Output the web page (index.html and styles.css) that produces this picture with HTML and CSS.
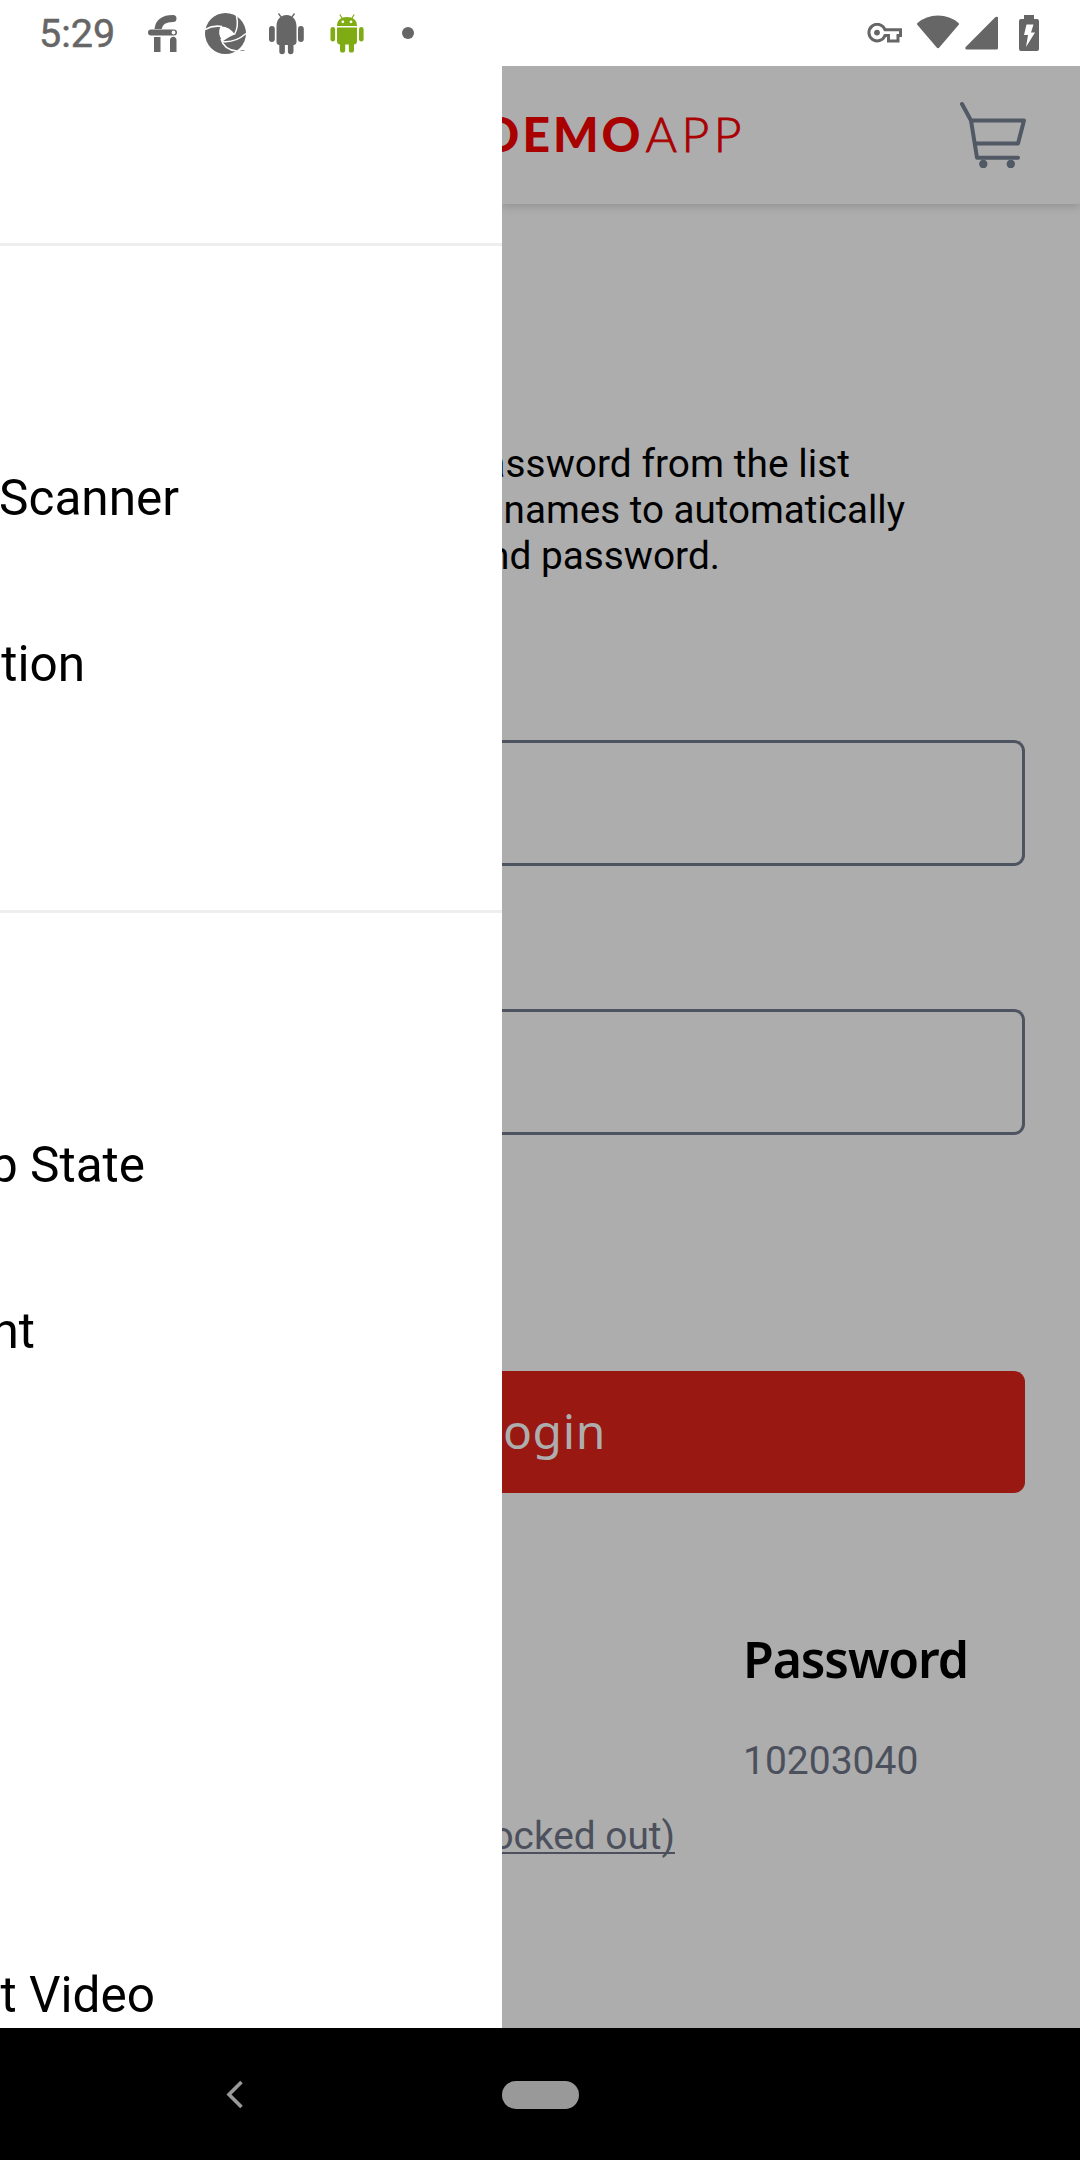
FILE: index.html
```html
<!DOCTYPE html>
<html lang="en">
<head>
<meta charset="utf-8">
<title>Demo App</title>
<link rel="stylesheet" href="styles.css">
</head>
<body>
<div class="screen">
  <header class="status">
    <span class="clock">5:29</span>
    <svg class="ic-fi" width="30" height="40" viewBox="0 0 30 40" fill="#666">
      <path d="M10 15C11 8 16 4.500 25 4.500" fill="none" stroke="#666" stroke-width="7" stroke-linecap="round"/>
      <path d="M5 15h20v-2h5v8H4z" fill="#fff"/>
      <rect x="0" y="15.500" width="29" height="6" rx="3"/><circle cx="25.500" cy="18.500" r="1.900" fill="#fff"/>
      <path d="M6 23h6.500v15H6zM22 38V26c0-2 1.500-3.300 3.300-3.300S28.500 24 28.500 26v12z"/>
    </svg>
    <svg class="ic-shutter" width="42" height="42" viewBox="0 0 42 42">
      <circle cx="20.500" cy="20.500" r="20.500" fill="#666"/>
      <path d="M15.500 13.500Q24 13 30 21.500Q25 23 17.500 28.500Q12 20 15.500 13.500z" fill="#fff"/>
      <g fill="none" stroke="#fff" stroke-width="1.500">
        <path d="M0 16.500Q8 12 17 13.500"/><path d="M31.500 3Q34 13 29.500 21.500"/><path d="M41 20.500Q30 30 17.500 28.500"/><path d="M32 38Q19 37 16 26"/>
      </g>
      <path d="M34 36.500h8v5h-8z" fill="#fff"/><path d="M35.500 37.500h4" stroke="#999"/>
    </svg>
    <svg class="ic-droid" width="36" height="42" viewBox="0 0 36 42" fill="#666">
      <path d="M7.500 13.500C7.500 6 12 2 17.500 2S27.500 6 27.500 13.500V29c0 1.500-1 3-3 3v6.500a2.800 2.800 0 0 1-5.600 0V32h-3v6.500a2.800 2.800 0 0 1-5.600 0V32c-2 0-2.800-1.500-2.800-3z"/>
      <rect x="0" y="13" width="5.800" height="16" rx="2.900"/><rect x="29" y="13" width="5.800" height="16" rx="2.900"/>
      <path d="M12 4L9.500.500M23 4L25.500.500" stroke="#666" stroke-width="1.300"/>
    </svg>
    <svg class="ic-droid-green" width="34" height="40" viewBox="0 0 34 40" fill="#7fac13">
      <path d="M7 12C7 6 11 3 17 3s10 3 10 9zM7 13.500h20V27c0 2-1 3.500-3 3.500V36a2.600 2.600 0 0 1-5.200 0v-5.500h-3.600V36a2.600 2.600 0 0 1-5.200 0v-5.500c-2 0-3-1.500-3-3.500z"/>
      <rect x=".500" y="13" width="4.600" height="14.500" rx="2.300"/><rect x="29" y="13" width="4.600" height="14.500" rx="2.300"/>
      <path d="M12 4L9.800.500M22 4L24.200.500" stroke="#7fac13" stroke-width="1.200"/>
      <circle cx="12.800" cy="7.800" r="1.400" fill="#fff"/><circle cx="21" cy="7.800" r="1.400" fill="#fff"/>
    </svg>
    <span class="more"></span>
    <svg class="ic-key" width="36" height="20" viewBox="0 0 36 20">
      <path d="M18 6.700A8.300 8.300 0 1 0 18 12.500H21.500V18H31V12.500H33.500V6.700Z" fill="none" stroke="#666" stroke-width="3"/>
      <circle cx="10" cy="9.600" r="2.900" fill="#666"/>
    </svg>
    <svg class="ic-wifi" width="42" height="34" viewBox="0 0 42 34"><path d="M.500 8Q9 .500 21 .500T41.500 8Q42.500 9 41.500 10L22.500 32.300Q21 34 19.500 32.300L.500 10Q-.500 9 .500 8z" fill="#666"/></svg>
    <svg class="ic-signal" width="34" height="34" viewBox="0 0 34 34"><path d="M33 2v30q0 1.500-1.500 1.500H1.500Q-.500 33 .700 31L30.500 1Q33 0 33 2z" fill="#666"/></svg>
    <svg class="ic-battery" width="20" height="36" viewBox="0 0 20 36"><path d="M5 0h10v4h3q2 0 2 2v28q0 2-2 2H2q-2 0-2-2V6q0-2 2-2h3z" fill="#666"/><path d="M7.500 9.500h7L12 17.500h4L7 32l2-12H5z" fill="#fff"/></svg>
  </header>

  <main class="main">
    <nav class="drawer">
      <div class="drawer-top"></div>
      <ul class="group group-a">
        <li></li>
        <li><span class="label scanner">Scanner</span></li>
        <li><span class="label location">tion</span></li>
        <li></li>
      </ul>
      <ul class="group">
        <li></li>
        <li><span class="label reset">p State</span></li>
        <li><span class="label finger">nt</span></li>
        <li></li><li></li><li></li>
        <li><span class="label video">t Video</span></li>
      </ul>
    </nav>

    <section class="page">
      <div class="appbar">
        <div class="brand"><b>DEMO</b><span>APP</span></div>
        <svg class="cart" width="66" height="66" viewBox="0 0 66 66" fill="none" stroke="#515964" stroke-width="4" stroke-linecap="round" stroke-linejoin="round">
          <path d="M2 2L11 18.500H64L58 41.500H15M11 18.500L17 55.700H58"/>
          <circle cx="23.300" cy="62" r="2.200"/><circle cx="50.800" cy="62" r="2.200"/>
        </svg>
      </div>
      <div class="intro">
        <span class="line one">assword from the list</span>
        <span class="line two">names to automatically</span>
        <span class="line three">nd password.</span>
      </div>
      <div class="field user"></div>
      <div class="field pass"></div>
      <div class="login"><span>ogin</span></div>
      <div class="accounts">
        <div class="users"><span class="line">ocked out)</span></div>
        <div class="secret"><h2>Password</h2><p>10203040</p></div>
      </div>
    </section>
  </main>

  <footer class="navbar">
    <svg class="back" width="18" height="30" viewBox="0 0 18 30"><path d="M15.500 2L3 14.500L15.500 27" fill="none" stroke="#999" stroke-width="3.600"/></svg>
    <span class="home"></span>
  </footer>
</div>
</body>
</html>
```
FILE: styles.css
```css
* { box-sizing: border-box; margin: 0; padding: 0; }
body { background: #fff; font-family: Roboto, "Noto Sans", sans-serif; }
.screen { display: grid; grid-template-rows: 66px 1962px 132px; width: 1080px; height: 2160px; overflow: hidden; }

.status { display: flex; align-items: flex-start; background: #fff; color: #666; }
.status svg { flex: none; display: block; }
.clock { width: 107px; padding-left: 39px; margin-top: 11px; font-size: 39.5px; line-height: 46px; font-weight: 400; -webkit-text-stroke: .5px #666; }
.ic-fi { margin: 14px 0 0 41px; }
.ic-shutter { margin: 13px 0 0 27px; }
.ic-droid { margin: 13px 0 0 22px; }
.ic-droid-green { margin: 14px 0 0 25px; }
.more { width: 12px; height: 12px; margin: 27px 0 0 38px; border-radius: 50%; background: #666; }
.ic-key { margin: 23px 0 0 453px; }
.ic-wifi { margin: 15px 0 0 14px; }
.ic-signal { margin: 16px 0 0 6px; }
.ic-battery { margin: 15px 0 0 20px; }

.main { display: flex; overflow: hidden; }
.drawer { width: 502px; flex: none; background: #fff; overflow: hidden; }
.drawer-top { height: 180px; border-bottom: 3px solid #eee; }
.group { list-style: none; padding-top: 3px; }
.group-a { height: 667px; border-bottom: 3px solid #eee; }
.group li { height: 166px; display: flex; align-items: center; }
.label { display: flex; justify-content: flex-end; overflow: hidden; white-space: nowrap; font-size: 49.5px; line-height: 58px; color: #000; }
.scanner { width: 179px; }
.location { width: 85px; }
.reset { width: 145px; }
.finger { width: 35px; }
.video { width: 155px; }

.page { flex: 1; background: #adadad; overflow: hidden; }
.appbar { height: 138px; padding-right: 54px; display: flex; justify-content: space-between; align-items: flex-start; box-shadow: 0 3px 8px rgba(0,0,0,.15); }
.brand { width: 244px; margin-top: 39px; display: flex; justify-content: flex-end; overflow: hidden; white-space: nowrap; font-family: Lato, sans-serif; font-size: 48px; line-height: 58px; color: #a90000; }
.brand b { font-weight: 900; letter-spacing: 3px; }
.brand span { margin-left: 2px; font-weight: 300; letter-spacing: 4.5px; -webkit-text-stroke: .8px #a90000; }
.cart { margin-top: 36px; }

.line { display: flex; justify-content: flex-end; overflow: hidden; white-space: nowrap; font-size: 38.8px; line-height: 46px; }
.intro { margin-top: 237px; color: #000; }
.one { width: 348px; letter-spacing: .05px; }
.two { width: 403px; font-size: 38.6px; }
.three { width: 218px; }
.field { height: 126px; margin-right: 55px; border: 3px solid #4e5360; border-left: 0; border-radius: 0 11px 11px 0; }
.user { margin-top: 161px; }
.pass { margin-top: 143px; }
.login { height: 122px; margin: 236px 55px 0 0; background: #991812; border-radius: 0 11px 11px 0; display: flex; align-items: center; }
.login span { width: 104px; margin-top: -2px; display: flex; justify-content: flex-end; font-family: "Noto Sans", sans-serif; font-size: 48px; line-height: 60px; letter-spacing: .6px; color: #adadad; }
.accounts { display: grid; grid-template-columns: 241px 1fr; color: #4b505c; }
.users { padding-top: 320px; }
.users .line { width: 173px; text-decoration: underline; text-decoration-thickness: 2px; text-underline-offset: 3px; text-decoration-skip-ink: none; }
.secret h2 { margin-top: 134px; font-family: "Noto Sans", sans-serif; font-size: 50px; line-height: 64px; font-weight: 600; letter-spacing: -1.1px; color: #000; }
.secret p { margin-top: 47px; font-size: 39px; line-height: 46px; }

.navbar { background: #000; display: flex; align-items: center; }
.back { margin: 2px 0 0 226px; }
.home { width: 77px; height: 28px; margin: 1px 0 0 258px; border-radius: 14px; background: #999; }
```
